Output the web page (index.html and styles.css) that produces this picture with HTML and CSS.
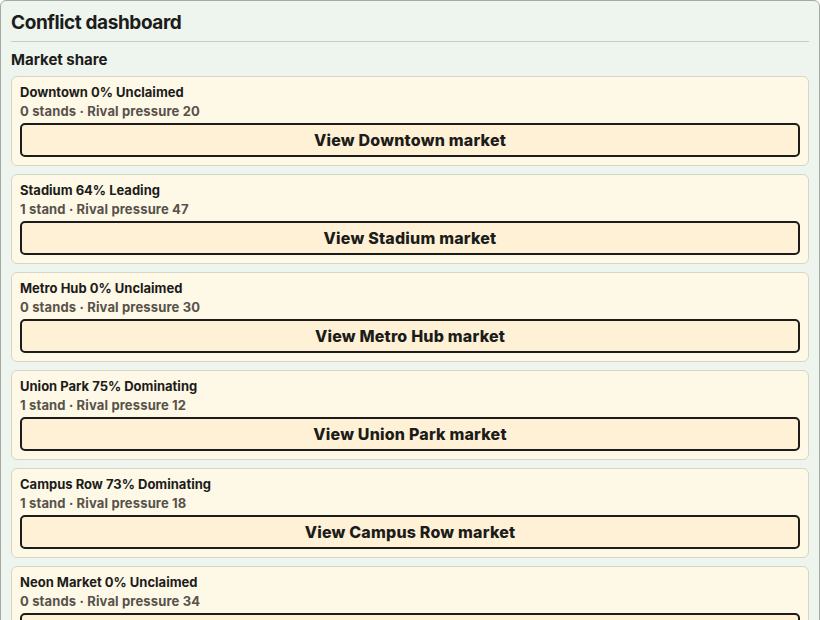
FILE: index.html
```html
<!DOCTYPE html>
<html lang="en">
<head>
<meta charset="UTF-8">
<meta name="viewport" content="width=device-width, initial-scale=1.0">
<title>Conflict dashboard</title>
<link rel="stylesheet" href="styles.css">
</head>
<body>

<div class="panel">
    <h1 class="panel-title">Conflict dashboard</h1>
    <h2 class="section-title">Market share</h2>

    <div class="market-list">
        <div class="market">
            <div class="market-name">Downtown 0% Unclaimed</div>
            <div class="market-meta">0 stands · Rival pressure 20</div>
            <button class="market-btn">View Downtown market</button>
        </div>
        <div class="market">
            <div class="market-name">Stadium 64% Leading</div>
            <div class="market-meta">1 stand · Rival pressure 47</div>
            <button class="market-btn">View Stadium market</button>
        </div>
        <div class="market">
            <div class="market-name">Metro Hub 0% Unclaimed</div>
            <div class="market-meta">0 stands · Rival pressure 30</div>
            <button class="market-btn">View Metro Hub market</button>
        </div>
        <div class="market">
            <div class="market-name">Union Park 75% Dominating</div>
            <div class="market-meta">1 stand · Rival pressure 12</div>
            <button class="market-btn">View Union Park market</button>
        </div>
        <div class="market">
            <div class="market-name">Campus Row 73% Dominating</div>
            <div class="market-meta">1 stand · Rival pressure 18</div>
            <button class="market-btn">View Campus Row market</button>
        </div>
        <div class="market">
            <div class="market-name">Neon Market 0% Unclaimed</div>
            <div class="market-meta">0 stands · Rival pressure 34</div>
            <button class="market-btn">View Neon Market market</button>
        </div>
    </div>
</div>

</body>
</html>
```

FILE: styles.css
```css
html, body {
    margin: 0;
}

body {
    font-family: Inter, "Noto Sans", sans-serif;
    background-color: #ffffff;
    color: #1c1c1a;
}

.panel {
    background-color: #eef4ee;
    border: 1px solid #a3aaa3;
    border-radius: 6px;
    padding: 10px 10px 10px;
}

.panel-title {
    font-size: 19px;
    font-weight: 700;
    line-height: 24px;
    letter-spacing: -0.4px;
    margin: 0;
    padding-bottom: 6px;
    border-bottom: 1px solid #c9ccc5;
}

.section-title {
    font-size: 15px;
    font-weight: 700;
    line-height: 20px;
    margin: 8px 0 6px;
}

.market-list {
    display: flex;
    flex-direction: column;
    gap: 8px;
}

.market {
    background-color: #fef8e7;
    border: 1px solid #d9d5c4;
    border-radius: 6px;
    padding: 7px 8px 8px;
}

.market-name {
    font-size: 13px;
    font-weight: 700;
    line-height: 17px;
}

.market-meta {
    font-size: 13px;
    font-weight: 700;
    line-height: 21px;
    letter-spacing: 0.15px;
    color: #57524a;
    margin-bottom: 1px;
}

.market-btn {
    display: block;
    width: 100%;
    height: 34px;
    font-family: inherit;
    font-size: 16px;
    font-weight: 800;
    letter-spacing: 0.2px;
    color: #1c1c1a;
    background-color: #fff1d6;
    border: 2px solid #1c1c1a;
    border-radius: 5px;
    cursor: pointer;
}
```
